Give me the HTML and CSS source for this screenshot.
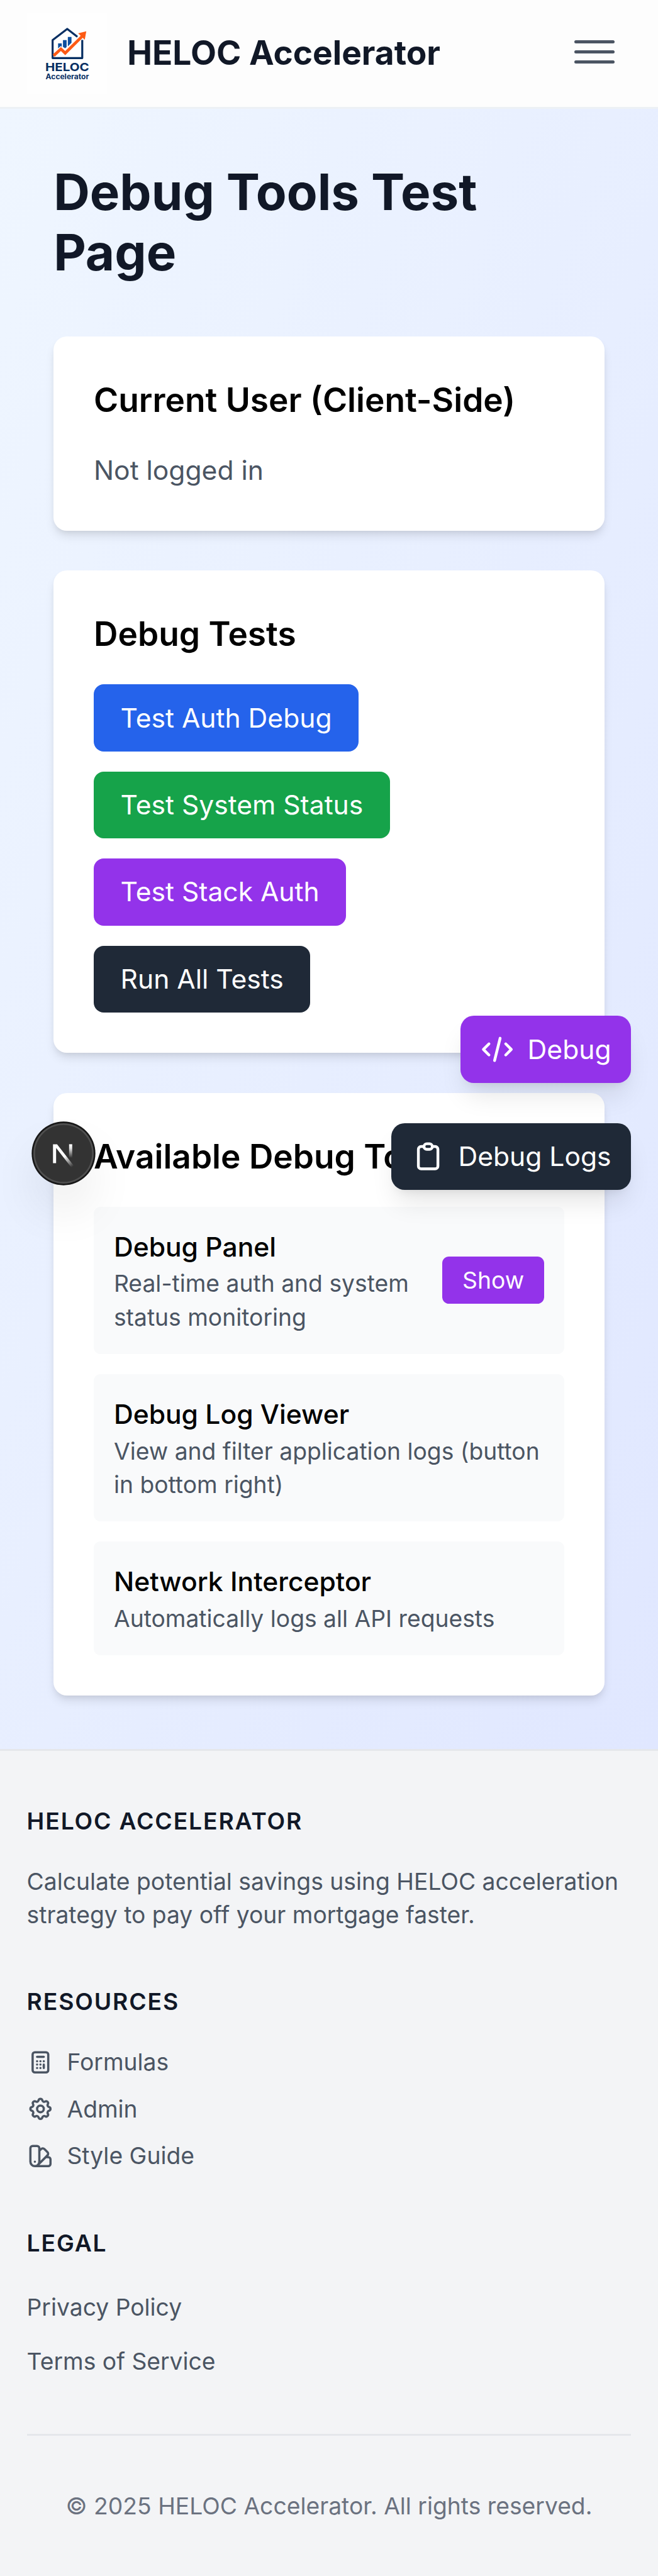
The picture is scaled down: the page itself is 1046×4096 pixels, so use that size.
FILE: index.html
```html
<!DOCTYPE html>
<html lang="en">
<head>
<meta charset="utf-8">
<title>HELOC Accelerator</title>
<link rel="stylesheet" href="styles.css">
</head>
<body>
<div class="page">
  <header class="header">
    <div class="brand">
      <svg class="logo" viewBox="0 0 132 132">
        <rect width="132" height="132" fill="#fefefe"/>
        <path d="M82.7 38.7 66 25.8 42 44.2V73.7H90.7V44" fill="none" stroke="#062e62" stroke-width="3.3" stroke-linejoin="round"/>
        <path d="M51 49.7h6v5.5l-1.8-1.2-4.2 3.8zM59 44.3h6v11.2l-2.4 2.2-3.6-2.5zM67 39h6v9.5l-6 6z" fill="#0b4f9e"/>
        <path d="M43.7 69.8 55.6 58.8 62.7 65.6 92 36.5" fill="none" stroke="#fd5a14" stroke-width="4.8"/>
        <path d="M97.3 29.7 84 33 94.8 43.7z" fill="#fd5a14"/>
        <text class="logo-text" x="30" y="95" font-size="18.6" textLength="72" lengthAdjust="spacingAndGlyphs">HELOC</text>
        <text class="logo-text" x="30.6" y="108" font-size="12" textLength="71" lengthAdjust="spacingAndGlyphs">Accelerator</text>
      </svg>
      <span class="brand-name">HELOC Accelerator</span>
    </div>
    <div class="menu"><span></span><span></span><span></span></div>
  </header>

  <main class="main">
    <h1 class="title">Debug Tools Test Page</h1>

    <section class="card">
      <h2 class="card-title">Current User (Client-Side)</h2>
      <p class="status">Not logged in</p>
    </section>

    <section class="card">
      <h2 class="card-title">Debug Tests</h2>
      <div class="tests">
        <button class="btn blue">Test Auth Debug</button>
        <button class="btn green">Test System Status</button>
        <button class="btn purple">Test Stack Auth</button>
        <button class="btn dark">Run All Tests</button>
      </div>
    </section>

    <section class="card">
      <h2 class="card-title">Available Debug Tools</h2>
      <div class="tools">
        <div class="tool">
          <div>
            <h3 class="tool-name">Debug Panel</h3>
            <p class="tool-text">Real-time auth and system status monitoring</p>
          </div>
          <button class="show">Show</button>
        </div>
        <div class="tool">
          <div>
            <h3 class="tool-name">Debug Log Viewer</h3>
            <p class="tool-text">View and filter application logs (button in bottom right)</p>
          </div>
        </div>
        <div class="tool">
          <div>
            <h3 class="tool-name">Network Interceptor</h3>
            <p class="tool-text">Automatically logs all API requests</p>
          </div>
        </div>
      </div>
    </section>
  </main>

  <footer class="footer">
    <section>
      <h3 class="footer-title">HELOC Accelerator</h3>
      <p class="footer-text">Calculate potential savings using HELOC acceleration strategy to pay off your mortgage faster.</p>
    </section>
    <section>
      <h3 class="footer-title">Resources</h3>
      <ul class="resources">
        <li>
          <svg class="icon-sm" viewBox="0 0 24 24"><path d="M9 7h6m0 10v-3m-3 3h.01M9 17h.01M9 14h.01M12 14h.01M15 11h.01M12 11h.01M9 11h.01M7 21h10a2 2 0 002-2V5a2 2 0 00-2-2H7a2 2 0 00-2 2v14a2 2 0 002 2z"/></svg>
          <span>Formulas</span>
        </li>
        <li>
          <svg class="icon-sm" viewBox="0 0 24 24"><path d="M10.325 4.317c.426-1.756 2.924-1.756 3.35 0a1.724 1.724 0 002.573 1.066c1.543-.94 3.31.826 2.37 2.37a1.724 1.724 0 001.065 2.572c1.756.426 1.756 2.924 0 3.35a1.724 1.724 0 00-1.066 2.573c.94 1.543-.826 3.31-2.37 2.37a1.724 1.724 0 00-2.572 1.065c-.426 1.756-2.924 1.756-3.35 0a1.724 1.724 0 00-2.573-1.066c-1.543.94-3.31-.826-2.37-2.37a1.724 1.724 0 00-1.065-2.572c-1.756-.426-1.756-2.924 0-3.35a1.724 1.724 0 001.066-2.573c-.94-1.543.826-3.31 2.37-2.37.996.608 2.296.07 2.572-1.065z"/><path d="M15 12a3 3 0 11-6 0 3 3 0 016 0z"/></svg>
          <span>Admin</span>
        </li>
        <li>
          <svg class="icon-sm" viewBox="0 0 24 24"><path d="M7 21a4 4 0 01-4-4V5a2 2 0 012-2h4a2 2 0 012 2v12a4 4 0 01-4 4zm0 0h12a2 2 0 002-2v-4a2 2 0 00-2-2h-2.343M11 7.343l1.657-1.657a2 2 0 012.828 0l2.829 2.829a2 2 0 010 2.828l-8.486 8.485M7 17h.01"/></svg>
          <span>Style Guide</span>
        </li>
      </ul>
    </section>
    <section>
      <h3 class="footer-title">Legal</h3>
      <ul class="legal">
        <li><a>Privacy Policy</a></li>
        <li><a>Terms of Service</a></li>
      </ul>
    </section>
    <p class="copyright">© 2025 HELOC Accelerator. All rights reserved.</p>
  </footer>

  <button class="float float-debug purple">
    <svg class="icon-md" viewBox="0 0 24 24"><path d="M10 20l4-16m4 4l4 4-4 4M6 16l-4-4 4-4"/></svg>
    <span>Debug</span>
  </button>
  <button class="float float-logs dark">
    <svg class="icon-md" viewBox="0 0 24 24"><path d="M9 5H7a2 2 0 00-2 2v12a2 2 0 002 2h10a2 2 0 002-2V7a2 2 0 00-2-2h-2M9 5a2 2 0 002 2h2a2 2 0 002-2M9 5a2 2 0 012-2h2a2 2 0 012 2"/></svg>
    <span>Debug Logs</span>
  </button>
  <div class="dev-badge">
    <svg viewBox="0 0 99 99">
      <defs>
        <linearGradient id="stem" x1="0" y1="34.5" x2="0" y2="57" gradientUnits="userSpaceOnUse">
          <stop offset="0" stop-color="#fff"/><stop offset=".3" stop-color="#fff" stop-opacity=".85"/><stop offset="1" stop-color="#fff" stop-opacity="0"/>
        </linearGradient>
        <linearGradient id="slash" x1="52" y1="54" x2="65" y2="71" gradientUnits="userSpaceOnUse">
          <stop offset="0" stop-color="#fff"/><stop offset="1" stop-color="#fff" stop-opacity="0"/>
        </linearGradient>
      </defs>
      <path d="M32.3 34.5H39L67 70.5 63 73.5 37.4 40.5V65.5H32.3z" fill="url(#slash)"/>
      <path d="M58.7 34.5H63.9V57.5H58.7z" fill="url(#stem)"/>
    </svg>
  </div>
</div>
</body>
</html>
```
FILE: styles.css
```css
/* One rem is 16 layout units; the page is 393 units wide. */
html { font-size: 42.583px; }
* { box-sizing: border-box; margin: 0; padding: 0; }
body {
  background: #f3f4f6;
  color: #000;
  font-family: Inter, "Liberation Sans", sans-serif;
  font-size: 1rem;
  line-height: 1.5rem;
}
button { border: 0; font: inherit; color: #fff; }
ul { list-style: none; }

.page { position: relative; width: 100%; overflow: hidden; }

.header {
  display: flex;
  align-items: center;
  justify-content: space-between;
  height: 4.0625rem;
  padding: 0 1.625rem 0 1rem;
  background: #fdfdfd;
  border-bottom: 3px solid #edf1f5;
}
.brand { display: flex; align-items: center; gap: 0.75rem; }
.logo { display: block; width: 3rem; height: 3rem; }
.logo-text { fill: #062e62; font-family: Inter, sans-serif; font-weight: 700; }
.brand-name { padding-bottom: 2px; color: #111827; font-size: 1.25rem; line-height: 1.75rem; font-weight: 700; }
.menu { display: flex; flex-direction: column; gap: 0.25rem; width: 1.5rem; margin-top: -0.125rem; }
.menu span { height: 0.125rem; border-radius: 0.0625rem; background: #4b5563; }

.main {
  display: flex;
  flex-direction: column;
  gap: 1.5rem;
  padding: 2rem;
  background: linear-gradient(to bottom right, #eff6ff, #e0e7ff);
}
.title { margin-bottom: 0.5rem; color: #111827; font-size: 1.875rem; line-height: 2.25rem; font-weight: 700; }
.card {
  padding: 1.5rem;
  border-radius: 0.5rem;
  background: #fff;
  box-shadow: 0 0.25rem 0.375rem -0.0625rem rgb(0 0 0 / 0.1), 0 0.125rem 0.25rem -0.125rem rgb(0 0 0 / 0.1);
}
.card-title { margin-bottom: 1rem; font-size: 1.25rem; line-height: 1.75rem; font-weight: 600; white-space: nowrap; }
.status { color: #4b5563; }

.tests { display: flex; flex-direction: column; align-items: flex-start; gap: 0.75rem; }
.btn { height: 2.5rem; padding: 0 1rem; border-radius: 0.375rem; }
.blue { background: #2563eb; }
.green { background: #16a34a; }
.purple { background: #9333ea; }
.dark { background: #1f2937; }

.tools { display: flex; flex-direction: column; gap: 0.75rem; }
.tool {
  display: flex;
  align-items: center;
  justify-content: space-between;
  padding: 0.75rem;
  border-radius: 0.25rem;
  background: #f9fafb;
}
.tool-name { font-size: 1rem; font-weight: 500; }
.tool-text { color: #4b5563; font-size: 0.875rem; line-height: 1.25rem; }
.show {
  padding: 0.25rem 0.75rem;
  border-radius: 0.25rem;
  background: #9333ea;
  font-size: 0.875rem;
  line-height: 1.25rem;
}

.footer {
  display: flex;
  flex-direction: column;
  gap: 2rem;
  padding: 2rem 1rem;
  border-top: 3px solid #e5e7eb;
  background: #f3f4f6;
  color: #4b5563;
  font-size: 0.875rem;
  line-height: 1.25rem;
}
.footer-title {
  margin-bottom: 1rem;
  color: #111827;
  font-size: 0.875rem;
  font-weight: 600;
  letter-spacing: 0.05em;
  text-transform: uppercase;
}
.resources { display: flex; flex-direction: column; gap: 0.5rem; }
.resources li { display: flex; align-items: center; gap: 0.5rem; }
.legal { display: flex; flex-direction: column; gap: 0.5rem; font-size: 1rem; line-height: 1.5rem; }
.legal a { font-size: 0.875rem; line-height: 1.25rem; }
.copyright { padding-top: 2rem; border-top: 3px solid #e5e7eb; color: #6b7280; text-align: center; }

.icon-sm, .icon-md { flex: none; fill: none; stroke: currentColor; stroke-width: 2; stroke-linecap: round; stroke-linejoin: round; }
.icon-sm { width: 1rem; height: 1rem; }
.icon-md { width: 1.25rem; height: 1.25rem; }

/* Floating developer controls lie over the page content. */
.float {
  position: absolute;
  right: 1rem;
  display: flex;
  align-items: center;
  gap: 0.5rem;
  padding: 0.5rem 0.75rem;
  border-radius: 0.5rem;
  line-height: 1.5rem;
  box-shadow: 0 0.625rem 0.9375rem -0.1875rem rgb(0 0 0 / 0.1), 0 0.25rem 0.375rem -0.25rem rgb(0 0 0 / 0.1);
}
.float-debug { top: 37.9375rem; }
.float-logs { top: 41.9375rem; }
.dev-badge {
  position: absolute;
  left: 1.25rem;
  top: 41.9375rem;
  width: 2.25rem;
  height: 2.25rem;
  border-radius: 50%;
  background: #333;
  box-shadow: 0 0 0 0.0625rem #171717, inset 0 0 0 0.0625rem rgb(255 255 255 / 0.14), 0 1rem 2rem -0.5rem rgb(0 0 0 / 0.24);
}
.dev-badge svg { display: block; width: 100%; height: 100%; }
```
